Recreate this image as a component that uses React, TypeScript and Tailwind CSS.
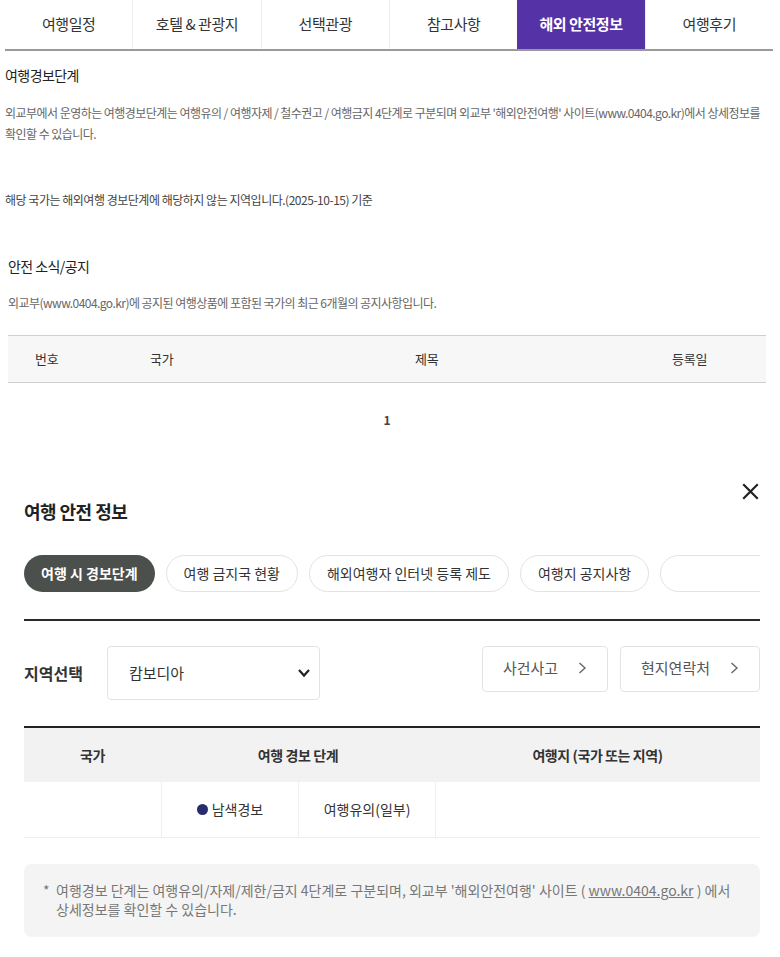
import React from "react";

const font = { fontFamily: '"Noto Sans CJK KR", "Noto Sans", sans-serif' };

const tabs = ["여행일정", "호텔 & 관광지", "선택관광", "참고사항", "해외 안전정보", "여행후기"];
const pills = ["여행 시 경보단계", "여행 금지국 현황", "해외여행자 인터넷 등록 제도", "여행지 공지사항"];

export default function App() {
  return (
    <div className="w-[780px] bg-white text-[#333]" style={font}>
      {/* Tabs */}
      <div className="pl-[5px] pr-[7px]">
        <div className="flex border-b-2 border-[#9a9a9a]">
          {tabs.map((t, i) => (
            <div
              key={t}
              className={
                "flex h-[49px] flex-1 items-center justify-center pb-[1px] text-[15px] tracking-[-0.03em] " +
                (i === 4
                  ? "bg-[#5532a6] font-bold text-white"
                  : "border-l border-[#eeeeee] text-[#333]") +
                (i === 0 ? " border-l-0" : "")
              }
            >
              {t}
            </div>
          ))}
        </div>
      </div>

      {/* Travel alert */}
      <div className="px-[5px]">
        <h3 className="mt-[14px] text-[14px] leading-[20px] tracking-[-0.04em] text-[#222]">여행경보단계</h3>
        <p className="mt-[17px] whitespace-nowrap text-[12px] leading-[21px] tracking-[-0.045em] text-[#666]">
          외교부에서 운영하는 여행경보단계는 여행유의 / 여행자제 / 철수권고 / 여행금지 4단계로 구분되며 외교부 '해외안전여행' 사이트(www.0404.go.kr)에서 상세정보를
          <br />
          확인할 수 있습니다.
        </p>
        <p className="mt-[45px] text-[12px] leading-[21px] tracking-[-0.04em] text-[#444]">
          해당 국가는 해외여행 경보단계에 해당하지 않는 지역입니다.(2025-10-15) 기준
        </p>
      </div>

      {/* Safety notice */}
      <div className="pl-[8px] pr-[14px]">
        <h3 className="mt-[46px] text-[14px] leading-[20px] tracking-[-0.04em] text-[#222]">안전 소식/공지</h3>
        <p className="mt-[17px] text-[12px] leading-[20px] tracking-[-0.045em] text-[#666]">
          외교부(www.0404.go.kr)에 공지된 여행상품에 포함된 국가의 최근 6개월의 공지사항입니다.
        </p>
        <div className="mt-[22px] grid h-[48px] grid-cols-[110px_150px_1fr_130px] items-center border-y border-[#cfcfcf] bg-[#f7f7f7] text-[13px] tracking-[-0.02em] text-[#333]">
          <div className="pl-[27px]">번호</div>
          <div className="pl-[32px]">국가</div>
          <div className="pl-[147px]">제목</div>
          <div className="pl-[36px]">등록일</div>
        </div>
        <div className="mt-[28px] text-center text-[12px] font-bold text-[#444]">1</div>
      </div>

      {/* Modal */}
      <div className="mt-[52px] pl-[24px] pr-[20px]">
        <div className="flex justify-end pr-[1px]">
          <svg width="17" height="17" viewBox="0 0 17 17" className="mt-[2px]">
            <path d="M2 2 L15 15 M15 2 L2 15" stroke="#222" strokeWidth="2.2" strokeLinecap="square" />
          </svg>
        </div>
        <h2 className="mt-[-2px] text-[18px] font-bold leading-[26px] tracking-[-0.03em] text-[#222]">여행 안전 정보</h2>

        <div className="mt-[31px] flex gap-[11px] overflow-hidden">
          {pills.map((p, i) => (
            <div
              key={p}
              className={
                "flex h-[37px] shrink-0 items-center justify-center rounded-full px-[17px] text-[14px] " +
                (i === 0
                  ? "bg-[#4b504d] font-bold text-white"
                  : "border border-[#e2e2e2] bg-white text-[#333]")
              }
            >
              {p}
            </div>
          ))}
          <div className="h-[37px] w-[140px] shrink-0 rounded-full border border-[#e2e2e2] bg-white" />
        </div>

        <div className="mt-[27px] h-[2px] bg-[#2a2a2a]" />

        <div className="mt-[25px] flex items-start">
          <div className="flex h-[53px] items-center text-[16px] font-bold text-[#333]">지역선택</div>
          <div className="ml-[24px] flex h-[54px] w-[213px] items-center justify-between rounded-[4px] border border-[#e3e3e3] pl-[21px] pr-[8px] text-[15px] text-[#333]">
            <span>캄보디아</span>
            <svg width="14" height="10" viewBox="0 0 14 10">
              <path d="M2 2 L7 7.5 L12 2" fill="none" stroke="#222" strokeWidth="2.2" />
            </svg>
          </div>
          <div className="ml-auto flex gap-[12px]">
            <div className="flex h-[46px] w-[126px] items-center justify-center gap-[20px] rounded-[4px] border border-[#e3e3e3] pb-[2px] text-[15px] text-[#555]">
              <span>사건사고</span>
              <svg width="9" height="14" viewBox="0 0 9 14">
                <path d="M1.5 2 L7 7 L1.5 12" fill="none" stroke="#666" strokeWidth="1.4" />
              </svg>
            </div>
            <div className="flex h-[46px] w-[140px] items-center justify-center gap-[20px] rounded-[4px] border border-[#e3e3e3] pb-[2px] text-[15px] text-[#555]">
              <span>현지연락처</span>
              <svg width="9" height="14" viewBox="0 0 9 14">
                <path d="M1.5 2 L7 7 L1.5 12" fill="none" stroke="#666" strokeWidth="1.4" />
              </svg>
            </div>
          </div>
        </div>

        {/* Alert table */}
        <div className="mt-[26px] border-t-2 border-[#222]">
          <div className="grid h-[54px] grid-cols-[137px_274px_1fr] items-center bg-[#f2f2f2] text-center text-[14px] font-bold tracking-[-0.03em] text-[#333]">
            <div>국가</div>
            <div>여행 경보 단계</div>
            <div>여행지 (국가 또는 지역)</div>
          </div>
          <div className="grid h-[56px] grid-cols-[137px_137px_137px_1fr] border-b border-[#efefef] text-center text-[14px] text-[#333]">
            <div />
            <div className="flex items-center justify-center gap-[4px] border-l border-[#efefef]">
              <span className="inline-block h-[11px] w-[11px] rounded-full bg-[#272d6b]" />
              <span>남색경보</span>
            </div>
            <div className="flex items-center justify-center border-l border-[#efefef]">여행유의(일부)</div>
            <div className="border-l border-[#efefef]" />
          </div>
        </div>

        <div className="mt-[26px] flex rounded-[8px] bg-[#f4f4f4] px-[19px] pb-[18px] pt-[17px] text-[14px] leading-[19px] text-[#777]">
          <span className="w-[13px] shrink-0">*</span>
          <p className="whitespace-nowrap">
            여행경보 단계는 여행유의/자제/제한/금지 4단계로 구분되며, 외교부 '해외안전여행' 사이트 ( <span className="underline">www.0404.go.kr</span> ) 에서
            <br />
            상세정보를 확인할 수 있습니다.
          </p>
        </div>
        <div className="h-[20px]" />
      </div>
    </div>
  );
}
